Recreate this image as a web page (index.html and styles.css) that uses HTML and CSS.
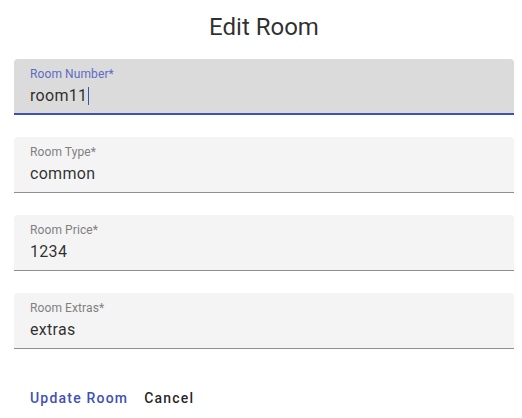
FILE: index.html
```html
<!DOCTYPE html>
<html>
<head>
<meta charset="utf-8">
<link rel="stylesheet" href="styles.css">
</head>
<body>
<div class="dialog">
  <h2 class="title">Edit Room</h2>
  <div class="fields">
    <div class="field focused">
      <div class="label">Room Number*</div>
      <div class="value">room11<span class="caret"></span></div>
    </div>
    <div class="field">
      <div class="label">Room Type*</div>
      <div class="value">common</div>
    </div>
    <div class="field">
      <div class="label">Room Price*</div>
      <div class="value">1234</div>
    </div>
    <div class="field">
      <div class="label">Room Extras*</div>
      <div class="value">extras</div>
    </div>
  </div>
  <div class="actions">
    <button class="btn primary">Update Room</button>
    <button class="btn">Cancel</button>
  </div>
</div>
</body>
</html>
```
FILE: styles.css
```css
* { box-sizing: border-box; }
body {
  margin: 0;
  background: #fff;
  font-family: Roboto, "Liberation Sans", sans-serif;
}
.dialog {
  width: 500px;
  margin-left: 14px;
}
.title {
  margin: 11px 0 16px;
  font-size: 24px;
  line-height: 32px;
  font-weight: 400;
  text-align: center;
  color: rgba(0,0,0,0.82);
}
.fields {
  display: flex;
  flex-direction: column;
  gap: 22px;
}
.field {
  height: 56px;
  padding: 9px 16px 0;
  background: #f4f4f4;
  border-radius: 4px 4px 0 0;
  border-bottom: 1px solid #8f8f8f;
}
.field.focused {
  background: #dbdbdb;
  border-bottom: 2px solid #3f51b5;
}
.label {
  font-size: 12px;
  line-height: 12px;
  color: #808080;
  letter-spacing: 0.1px;
}
.focused .label { color: #5d6cc2; }
.value {
  margin-top: 6px;
  font-size: 16px;
  line-height: 19px;
  color: rgba(0,0,0,0.82);
  letter-spacing: 0.3px;
  display: flex;
  align-items: center;
}
.caret {
  display: inline-block;
  width: 1px;
  height: 18px;
  margin-left: 1px;
  background: #3f51b5;
}
.actions {
  display: flex;
  gap: 16px;
  margin-top: 37px;
  padding-left: 16px;
}
.btn {
  border: 0;
  background: none;
  padding: 0;
  font-family: Roboto, "Liberation Sans", sans-serif;
  font-size: 14px;
  line-height: 24px;
  font-weight: 500;
  letter-spacing: 1.2px;
  color: rgba(0,0,0,0.87);
}
.btn.primary { color: #3f51b5; }
```
